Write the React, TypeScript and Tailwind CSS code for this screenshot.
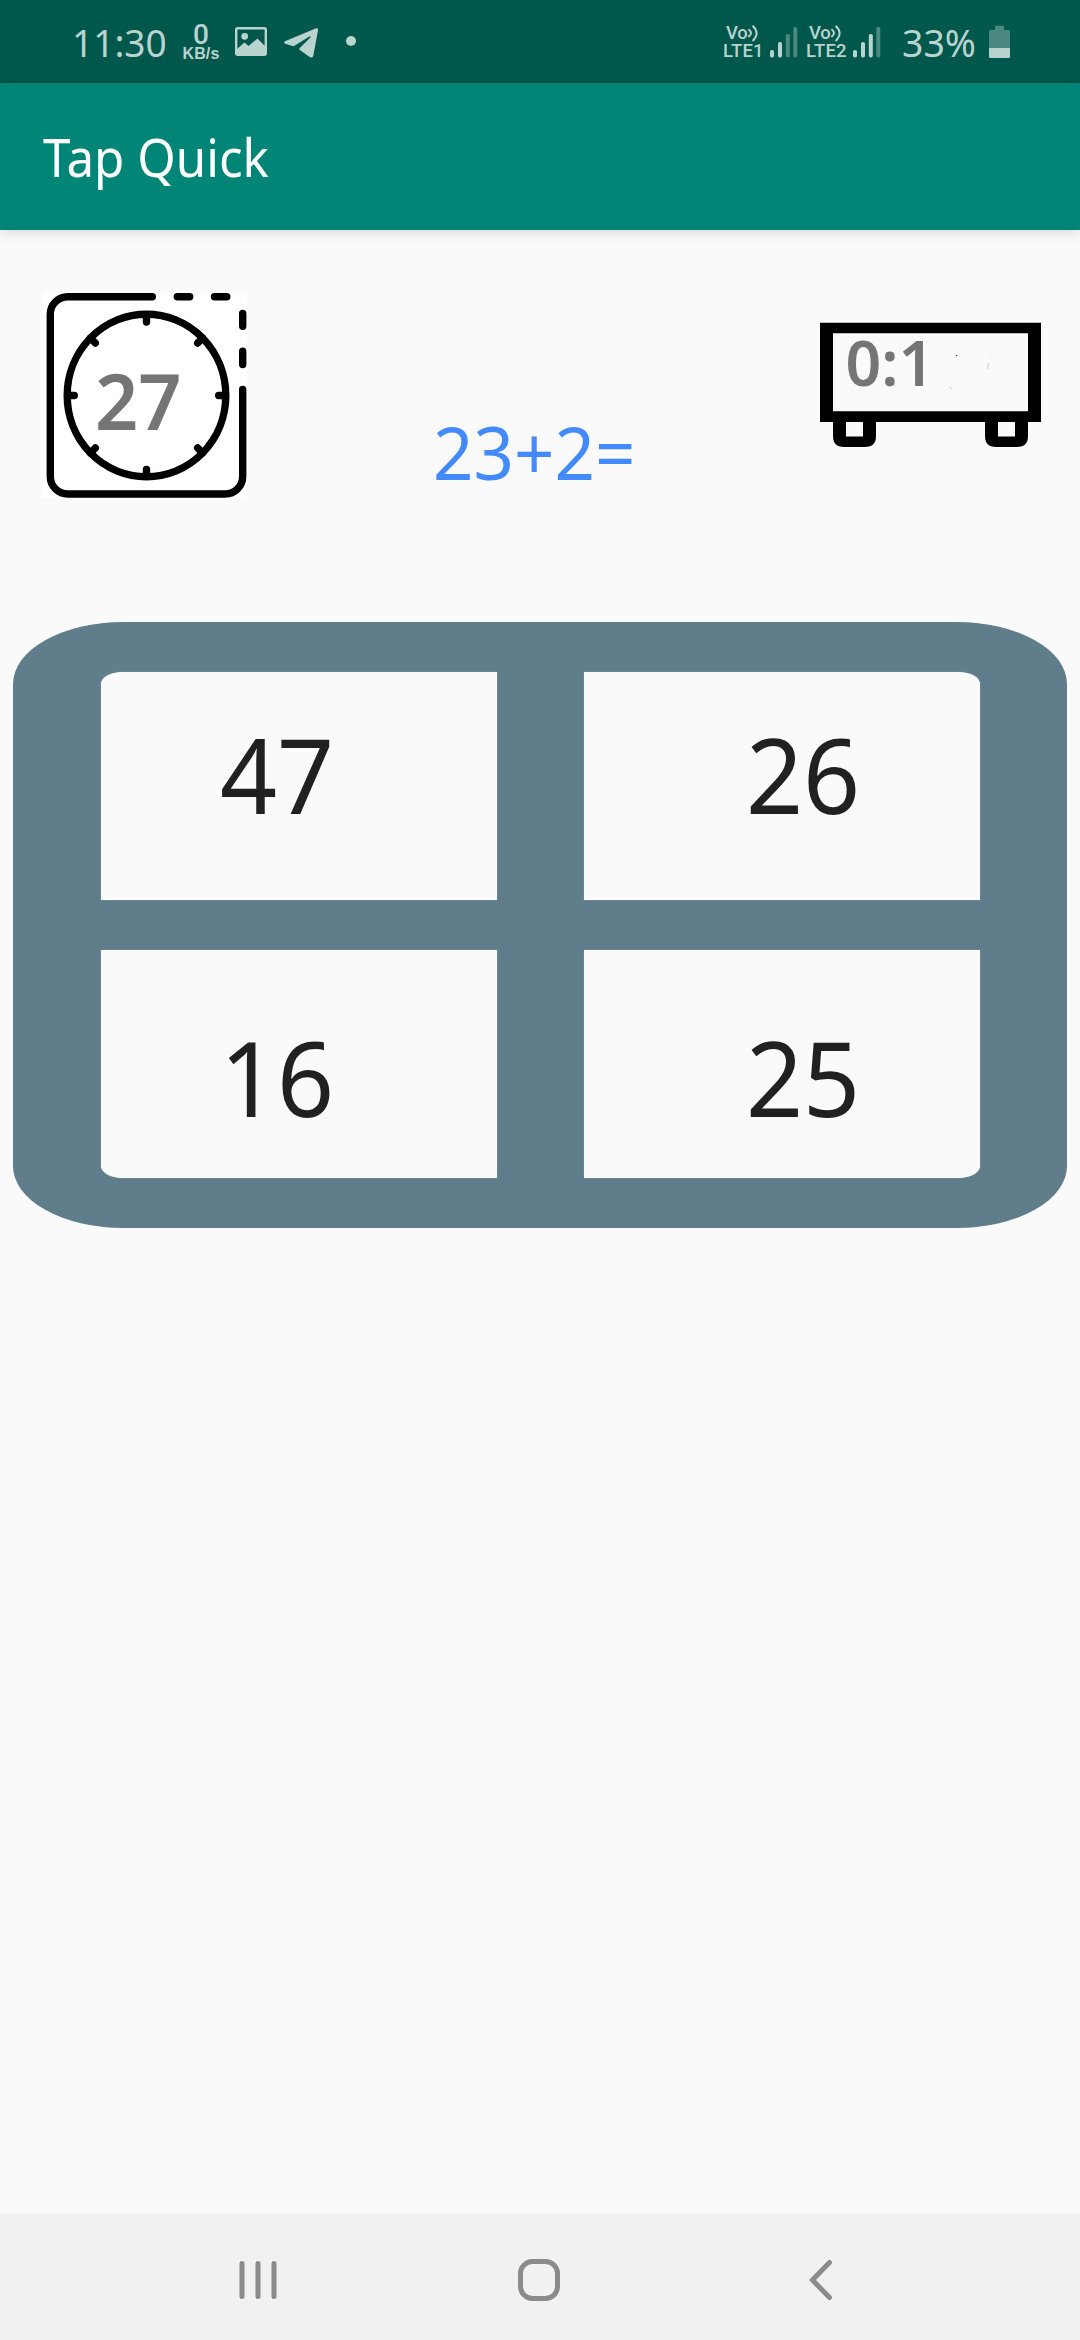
import React from "react";

type SignalProps = { label: string; active: number };

const BARS = [
  { x: 0, y: 50 },
  { x: 8, y: 42 },
  { x: 15.8, y: 34 },
  { x: 23.3, y: 27 },
];

function Signal({ label, active }: SignalProps) {
  return (
    <div className="flex">
      <div className="w-[47px] pt-[24px] font-[Roboto] text-[18.5px] font-medium leading-none">
        <div className="flex h-[18px] pl-[3px]">
          <span className="tracking-[-0.3px]">Vo</span>
          <svg className="h-[18px] w-[12px] shrink-0" viewBox="0 0 12 18" fill="none" stroke="currentColor" strokeWidth="2">
            <path d="M1.4 5.2Q6.6 9 1.4 13M5.6 1.8Q13.6 9.2 5.6 17" />
          </svg>
        </div>
        <div className="whitespace-nowrap tracking-[0.2px]">{label}</div>
      </div>
      <svg className="h-[83px] w-[28px]" viewBox="0 0 28 83" fill="currentColor">
        {BARS.map((bar, index) => (
          <rect key={bar.x} x={bar.x} y={bar.y} width="4" height={57.5 - bar.y} rx="1.8" opacity={index < active ? 1 : 0.4} />
        ))}
      </svg>
    </div>
  );
}

function StatusBar() {
  return (
    <header className="flex h-[83px] bg-[#00574b] text-[#b9d3cf]">
      <div className="ml-[72px] w-[110px] pt-[22px] text-[39px] leading-none">
        <div className="w-fit origin-left scale-x-[0.95] whitespace-nowrap">11:30</div>
      </div>
      <div className="flex w-[38px] flex-col items-center pt-[20px] leading-none">
        <span className="h-[26px] font-[Roboto] text-[28px] font-medium leading-[29px]">0</span>
        <span className="font-['Liberation_Sans'] text-[16px] font-bold tracking-[0.1px]">KB/s</span>
      </div>
      <svg className="ml-[15px] mt-[27px] h-[29px] w-[32px]" viewBox="0 0 32 29">
        <rect x="1.2" y="1.2" width="29.6" height="26.6" rx="1.5" fill="none" stroke="currentColor" strokeWidth="2.4" />
        <circle cx="9.7" cy="9.3" r="3.4" fill="currentColor" />
        <path d="M2 22L9.5 15.5L13.5 19L22.5 11.5L30 19V28H2Z" fill="currentColor" />
      </svg>
      <svg className="ml-[17px] mt-[28px] h-[30px] w-[35px]" viewBox="0 0 35 30" fill="currentColor">
        <path d="M1 13.2L31.5 .4Q34.6-.4 34 2.6L29.3 27.7Q28.6 30.4 26 29.2L15.8 22Q14.7 21 15.8 19.9L26.4 9.4Q27.2 8 25.4 8.5L10.8 17.4Q9.3 18.4 7.6 17.8L1.3 15.8Q-.9 14.5 1 13.2Z" />
      </svg>
      <div className="ml-[27px] mt-[36px] size-[10px] rounded-full bg-current" />
      <div className="ml-auto flex">
        <Signal label="LTE1" active={2} />
        <div className="w-[8px]" />
        <div className="-ml-[1px] mr-px w-0" />
        <Signal label="LTE2" active={3} />
      </div>
      <div className="ml-[21px] w-[87px] pt-[22px] text-[39px] leading-none">
        <div className="w-fit origin-left scale-x-[0.96] whitespace-nowrap">33%</div>
      </div>
      <svg className="mr-[70px] mt-[25px] h-[33px] w-[21px]" viewBox="0 0 21 33" fill="currentColor">
        <path d="M6 .7H15V5H19.5Q21 5 21 6.5V23H0V6.5Q0 5 1.5 5H6Z" opacity=".4" />
        <path d="M0 23H21V31.5Q21 33 19.5 33H1.5Q0 33 0 31.5Z" />
      </svg>
    </header>
  );
}

function RoundTimer({ value }: { value: string }) {
  return (
    <div className="relative ml-[42px] mt-[63px] h-[205px] w-[205px] bg-white">
      <svg className="size-full" viewBox="42 293 205 205" fill="none" stroke="#000" strokeWidth="7.4" strokeLinecap="round">
        <path d="M152.3 296.7H67.8A17.5 17.5 0 0 0 50.3 314.2V476.5A17.5 17.5 0 0 0 67.8 494H225.2A17.5 17.5 0 0 0 242.7 476.5V389.5" />
        <path d="M177.3 296.7H189.7M214.5 296.7H226.8M242.7 313.5V326.3M242.7 351.2V364.5" />
        <ellipse cx="146.5" cy="395.5" rx="79.3" ry="81.3" />
        <path d="M146.5 315V322M146.5 476V469.5M68 395.5H74.3M225 395.5H218.7M90.5 338L95.3 343M202.5 338L197.7 343M202.5 453L197.7 448M90.5 453L95.3 448" />
      </svg>
      <div className="absolute left-[53px] top-[68px] origin-left scale-x-[0.97] text-[78px] font-[570] leading-none text-[#757575]">{value}</div>
    </div>
  );
}

function ScoreClock({ value }: { value: string }) {
  return (
    <div className="relative mr-[39px] mt-[92px] h-[126px] w-[221px]">
      <svg className="size-full" viewBox="820 322 221 126">
        <path fillRule="evenodd" d="M820 322.7H1041V422H1028V436Q1028 447 1017 447H996Q985 447 985 436V422H876V436Q876 447 865 447H844Q833 447 833 436V422H820ZM833 333.2V411.3H1028V333.2ZM846 422V436.5H863V422ZM998 422V436.5H1015V422Z" />
        <path d="M956 355.5h1.2" stroke="#333" />
        <path d="M988.5 363L987.3 369M990 355h1M949 386.5l3 2.3" stroke="#bbb" strokeWidth=".7" />
      </svg>
      <div className="absolute left-[25.5px] top-[8.5px] origin-left whitespace-nowrap text-[62.5px] font-[570] leading-none text-[#757575]">{value}</div>
    </div>
  );
}

const ANSWERS = [
  { value: "47", cell: "rounded-tl-[22px_12px]", text: "pl-[119px] pt-[50px]" },
  { value: "26", cell: "rounded-tr-[22px_12px]", text: "pl-[162px] pt-[50px]" },
  { value: "16", cell: "rounded-bl-[22px_12px]", text: "pl-[119px] pt-[75px]" },
  { value: "25", cell: "rounded-br-[22px_12px]", text: "pl-[162px] pt-[75px]" },
];

function AnswerBoard() {
  return (
    <div className="mx-[13px] grid h-[606px] grid-cols-[396px_396px] grid-rows-[228px_228px] content-center justify-center gap-x-[87px] gap-y-[50px] rounded-[110px/62px] bg-[#607d8b]">
      {ANSWERS.map((answer) => (
        <button
          key={answer.value}
          className={`bg-[#fafafa] text-left text-[104px] font-[370] leading-none text-[#212121] shadow-[0_0_1px_#d5e0e4] flex items-start ${answer.cell} ${answer.text}`}
        >
          <span className="origin-left scale-x-[0.96]">{answer.value}</span>
        </button>
      ))}
    </div>
  );
}

function NavigationBar() {
  return (
    <nav className="mt-auto flex h-[126px] items-center bg-[#f1f1f1] pt-[6px]">
      <svg className="ml-[236px] size-[44px]" viewBox="0 0 44 44" stroke="#8b8b8b" strokeWidth="5" strokeLinecap="round">
        <path d="M6 5.5V38.5M22 5.5V38.5M38 5.5V38.5" />
      </svg>
      <svg className="ml-[237px] size-[44px]" viewBox="0 0 44 44" fill="none" stroke="#8b8b8b" strokeWidth="5">
        <rect x="3.5" y="3.5" width="37" height="37" rx="12" />
      </svg>
      <svg className="ml-[239px] size-[44px]" viewBox="0 0 44 44" fill="none" stroke="#8b8b8b" strokeWidth="5" strokeLinecap="round">
        <path d="M29.5 4.5L12.5 22L29.5 39.5" />
      </svg>
    </nav>
  );
}

export default function App() {
  return (
    <div className="flex h-[2340px] w-[1080px] flex-col overflow-hidden bg-[#fafafa] font-['Noto_Sans',sans-serif]">
      <StatusBar />
      <div className="h-[147px] bg-[#008577] pl-[42.5px] pt-[47px] text-[53px] leading-none text-white shadow-[0_3px_12px_rgba(0,0,0,0.13)]">
        <h1 className="w-fit origin-left scale-x-[0.93] whitespace-nowrap">Tap Quick</h1>
      </div>
      <main>
        <section className="flex h-[392px] items-start">
          <RoundTimer value="27" />
          <div className="ml-[186px] mt-[185px] origin-left scale-x-[0.97] text-[73px] leading-none text-[#448aff]">23+2=</div>
          <div className="ml-auto">
            <ScoreClock value="0:1" />
          </div>
        </section>
        <AnswerBoard />
      </main>
      <NavigationBar />
    </div>
  );
}
